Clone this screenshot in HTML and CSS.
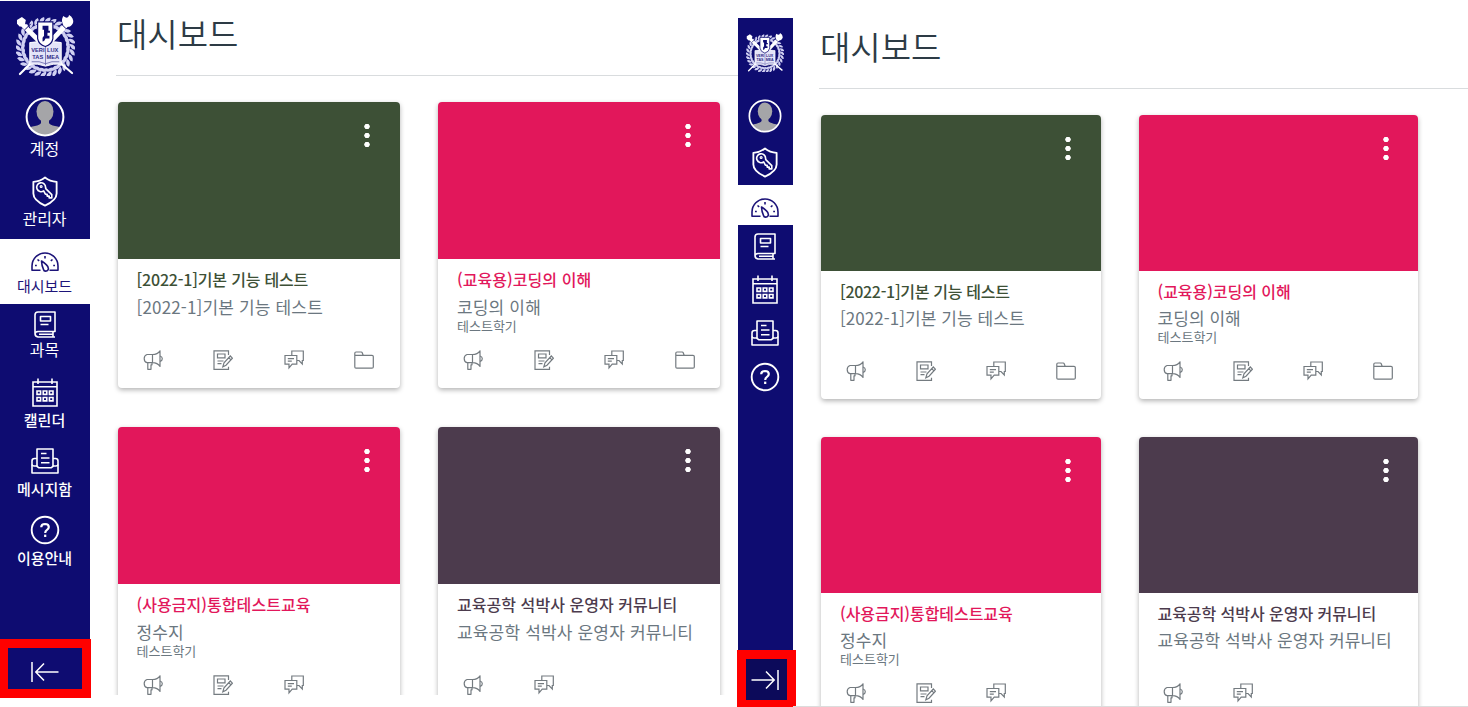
FILE: index.html
```
<!DOCTYPE html>
<html lang="ko">
  <head>
    <meta charset="UTF-8" />
    <meta name="viewport" content="width=device-width, initial-scale=1.0" />
    <title>대시보드</title>
    <link rel="stylesheet" href="styles.css">
  </head>
  <body>
    <!-- shared icons -->
    <svg class="sprite" aria-hidden="true">
      <symbol id="crest" viewBox="0 0 60 62">
        <defs>
          <g id="leaf">
            <path d="M29 8.5 q0 -5.5 6 -6 q1 4.5 -6 6z M29 8.5 q3 5 7.5 3.5 q-1.5 -5 -7.5 -3.5z" />
          </g>
          <g id="leaves">
            <use href="#leaf" />
            <use href="#leaf" transform="rotate(12 30 33)" />
            <use href="#leaf" transform="rotate(24 30 33)" />
            <use href="#leaf" transform="rotate(36 30 33)" />
            <use href="#leaf" transform="rotate(48 30 33)" />
          </g>
        </defs>
        <g fill="#d0d0f2">
          <use href="#leaves" />
          <use href="#leaves" transform="rotate(60 30 33)" />
          <use href="#leaves" transform="rotate(120 30 33)" />
          <use href="#leaves" transform="rotate(180 30 33)" />
          <use href="#leaves" transform="rotate(240 30 33)" />
          <use href="#leaves" transform="rotate(300 30 33)" />
        </g>
        <g fill="none" stroke="#fff" stroke-linecap="round">
          <path d="M6 9 L24 27" stroke-width="5" />
          <path d="M53 8 L36 26" stroke-width="5" />
          <path d="M17 47 L4 60 M43 47 L57 59" stroke-width="2.2" />
        </g>
        <path d="M1 5 l5 -3 4 3 -1 5 -5 2 -3 -3z M48 1 q5 4 6 -1 q5 3 4 8 q-3 6 -9 3 q-4 -4 -1 -10z" fill="#fff" />
        <path d="M9 15 L15 9 M46 9 L51 14" stroke="#0e0c71" />
        <path d="M14 28 q8 -2 16 1 q8 -3 16 -1 v22 q-8 -1 -16 2 q-8 -3 -16 -2z" fill="#e4e4f8" stroke="#fff" />
        <path d="M30 31 v20 M16 47.5 q8 -1 14 2 q6 -3 14 -2" fill="none" stroke="#6462aa" stroke-width=".8" />
        <g class="crest-text">
          <text x="15.5" y="38">VERI</text>
          <text x="31.5" y="38">LUX</text>
          <text x="16.5" y="44.5">TAS</text>
          <text x="31" y="44.5">MEA</text>
        </g>
        <path d="M22 7 h15.5 v17 q-1 6 -7.7 8 q-6.8 -2 -7.8 -8z" fill="#fff" stroke="#0e0c71" stroke-width="1.2" />
        <path d="M27 11 h6 v5 h1.5 v2 h-2.5 v3 h2 v3 h-4 q-1 3 -3 3 v-4 l1.5 -2 v-6 h-1.5z" fill="#0e0c71" />
      </symbol>

      <symbol id="avatar" viewBox="0 0 40 40">
        <clipPath id="face"><circle cx="20" cy="20" r="18" /></clipPath>
        <g clip-path="url(#face)" fill="#a5a5a8">
          <ellipse cx="20" cy="14.5" rx="8.5" ry="10.5" />
          <path d="M16 22 h8 v4 q1 2 6 3 q7 1 9 5 v6 H1 v-6 q2 -4 9 -5 q5 -1 6 -3z" />
        </g>
        <circle cx="20" cy="20" r="18.4" fill="none" stroke="#fff" stroke-width="2" />
      </symbol>

      <symbol id="shield" viewBox="0 0 28 32">
        <g fill="none" stroke="currentColor" stroke-width="1.9" stroke-linejoin="round">
          <path d="M14 1.5 Q19 5.5 26 6 V18 Q26 25 14 30.5 Q2 25 2 18 V6 Q9 5.5 14 1.5z" />
          <path d="M12.6 15.4 A4.6 4.6 0 1 1 14.6 11.8 L14.8 13 L21 19.2 V22.6 H18.3 V20.7 H16.2 V18.8 H14.4z" stroke-width="1.7" />
          <circle cx="10" cy="10.8" r="1" stroke-width="1.2" />
        </g>
      </symbol>

      <symbol id="gauge" viewBox="0 0 28 20">
        <g fill="none" stroke="currentColor" stroke-width="1.6" stroke-linejoin="round">
          <path d="M9.5 18.3 H1 V14 A13 13 0 0 1 27 14 V18.3 H18.5" />
          <path d="M10.5 9 Q16.8 13 17.3 16 A2.5 2.5 0 0 1 12.4 17.2 Q10.8 14 10.5 9z" />
          <path d="M14 4 v2.5 M6.5 7.5 l1.7 1.4 M21.5 7.5 l-1.7 1.4 M4 13.5 h1.8 M22.2 13.5 H24" />
        </g>
      </symbol>

      <symbol id="book" viewBox="0 0 22 27">
        <g fill="none" stroke="currentColor" stroke-width="1.6" stroke-linejoin="round">
          <path d="M21 26 H4 Q1 25.5 1 22.5 V4 Q1 1 4 1 H21 V20.5 H4 Q1.2 20.8 1 23" />
          <path d="M19 20.8 V26 M5 23.3 H19" />
          <path d="M6.5 5.5 H16.5 V10 H6.5z M6.5 13.5 H14.5" />
        </g>
      </symbol>

      <symbol id="calendar" viewBox="0 0 26 29">
        <g fill="none" stroke="currentColor" stroke-width="1.6">
          <path d="M1 4 H25 V28 H1z M1 8.8 H25 M6 .5 V6 M20 .5 V6" />
          <path d="M5 13 h3.6 v3.4 h-3.6z M11.2 13 h3.6 v3.4 h-3.6z M17.4 13 h3.6 v3.4 h-3.6z M5 19.5 h3.6 v3.4 h-3.6z M11.2 19.5 h3.6 v3.4 h-3.6z M17.4 19.5 h3.6 v3.4 h-3.6z" />
        </g>
      </symbol>

      <symbol id="inbox" viewBox="0 0 28 26">
        <g fill="none" stroke="currentColor" stroke-width="1.6" stroke-linejoin="round">
          <path d="M6 18 V1 H22 V18" />
          <path d="M6 10.5 H3.5 Q1 10.5 1 13 V25 H27 V13 Q27 10.5 24.5 10.5 H22" />
          <path d="M1 16.5 Q1.3 18 3 18 H5.5 L8 19.8 H20 L22.5 18 H25 Q26.7 18 27 16.5" />
          <path d="M10 5.5 H15.5 M10 10 H18.5 M10 14.7 H18.5" />
        </g>
      </symbol>

      <symbol id="help" viewBox="0 0 30 30">
        <g fill="none" stroke="currentColor" stroke-width="1.9">
          <circle cx="15" cy="15" r="13.3" />
          <path d="M11.2 12.3 Q11.3 9 15 9 Q18.8 9.1 18.8 12.1 Q18.8 13.8 17 14.9 Q15.2 16 15.2 18" stroke-width="2.2" />
          <path d="M15.2 19.6 V22" stroke-width="2.2" />
        </g>
      </symbol>

      <symbol id="collapse" viewBox="0 0 28 20">
        <path d="M1 0 V20 M27.5 10 H5 M13 1.5 L4.8 10 L13 18.5" fill="none" stroke="currentColor" stroke-width="1.5" />
      </symbol>

      <symbol id="announce" viewBox="0 0 20 20">
        <g fill="none" stroke="currentColor" stroke-width="1.2" stroke-linejoin="round">
          <path d="M9.5 4.5 H4 Q1.2 5.5 1.2 8.5 Q1.2 12 4 12.7 H9.5z M9.5 4.5 Q14.5 4.5 17 .8 V16.5 Q14.5 12.7 9.5 12.7" />
          <path d="M4.8 12.7 V19.3 H8 V14.8 H9 V12.7 M17 6 Q19.3 6.7 19.3 8.7 Q19.3 10.7 17 11.3" />
        </g>
      </symbol>

      <symbol id="assignment" viewBox="0 0 20 20">
        <g fill="none" stroke="currentColor" stroke-width="1.2">
          <path d="M15.5 5 V.8 H1 V19.3 H15.5 V16.8" />
          <path d="M4.5 4 H12 V7.8 H4.5z M4.5 11 H10.5 M4.5 13.6 H8.5" />
          <path d="M9.8 16.8 L11 12.8 L17.3 6 L19.4 8.2 L13 15.2 L9.8 16.8z M15.8 7.6 L17.9 9.8" />
        </g>
      </symbol>

      <symbol id="discussion" viewBox="0 0 20 20">
        <g fill="none" stroke="currentColor" stroke-width="1.2">
          <path d="M1 5.5 H12.8 V14.2 H8.2 L5 17.8 V14.2 H1z M3.8 8.7 H10 M3.8 11.2 H7.8" />
          <path d="M7.8 5.2 V1 H19.3 V10.5 H18.3 V14 L15 10.5 H13" />
        </g>
      </symbol>

      <symbol id="folder" viewBox="0 0 20 20">
        <path d="M.8 5.3 V3.3 Q.8 2 2 2 H7.2 Q8 2 8.2 2.8 L9.2 5.3 H18 Q19.3 5.3 19.3 6.5 V17 Q19.3 18.2 18 18.2 H2 Q.8 18.2 .8 17z M.8 5.3 H9.2" fill="none" stroke="currentColor" stroke-width="1.2" />
      </symbol>
    </svg>

    <div class="screens">
      <!-- expanded menu -->
      <section class="screen expanded">
        <nav class="sidebar">
          <a class="logo"><svg><use href="#crest" /></svg></a>
          <a class="item account"><svg><use href="#avatar" /></svg><span>계정</span></a>
          <a class="item admin"><svg><use href="#shield" /></svg><span>관리자</span></a>
          <a class="item dashboard active"><svg><use href="#gauge" /></svg><span>대시보드</span></a>
          <a class="item courses"><svg><use href="#book" /></svg><span>과목</span></a>
          <a class="item calendar"><svg><use href="#calendar" /></svg><span>캘린더</span></a>
          <a class="item inbox"><svg><use href="#inbox" /></svg><span>메시지함</span></a>
          <a class="item help"><svg><use href="#help" /></svg><span>이용안내</span></a>
          <button class="toggle"><svg><use href="#collapse" /></svg></button>
        </nav>
        <main class="content">
          <h1>대시보드</h1>
          <div class="cards">
            <article class="card green">
              <div class="cover"><i class="dots"></i></div>
              <div class="info">
                <h2>[2022-1]기본 기능 테스트</h2>
                <p class="name">[2022-1]기본 기능 테스트</p>
              </div>
              <div class="actions">
                <svg><use href="#announce" /></svg>
                <svg><use href="#assignment" /></svg>
                <svg><use href="#discussion" /></svg>
                <svg><use href="#folder" /></svg>
              </div>
            </article>
            <article class="card pink">
              <div class="cover"><i class="dots"></i></div>
              <div class="info">
                <h2>(교육용)코딩의 이해</h2>
                <p class="name">코딩의 이해</p>
                <p class="term">테스트학기</p>
              </div>
              <div class="actions">
                <svg><use href="#announce" /></svg>
                <svg><use href="#assignment" /></svg>
                <svg><use href="#discussion" /></svg>
                <svg><use href="#folder" /></svg>
              </div>
            </article>
            <article class="card pink">
              <div class="cover"><i class="dots"></i></div>
              <div class="info">
                <h2>(사용금지)통합테스트교육</h2>
                <p class="name">정수지</p>
                <p class="term">테스트학기</p>
              </div>
              <div class="actions">
                <svg><use href="#announce" /></svg>
                <svg><use href="#assignment" /></svg>
                <svg><use href="#discussion" /></svg>
              </div>
            </article>
            <article class="card purple">
              <div class="cover"><i class="dots"></i></div>
              <div class="info">
                <h2>교육공학 석박사 운영자 커뮤니티</h2>
                <p class="name">교육공학 석박사 운영자 커뮤니티</p>
              </div>
              <div class="actions">
                <svg><use href="#announce" /></svg>
                <svg><use href="#discussion" /></svg>
              </div>
            </article>
          </div>
        </main>
      </section>

      <!-- collapsed menu -->
      <section class="screen collapsed">
        <nav class="sidebar">
          <a class="logo"><svg><use href="#crest" /></svg></a>
          <a class="item account"><svg><use href="#avatar" /></svg></a>
          <a class="item admin"><svg><use href="#shield" /></svg></a>
          <a class="item dashboard active"><svg><use href="#gauge" /></svg></a>
          <a class="item courses"><svg><use href="#book" /></svg></a>
          <a class="item calendar"><svg><use href="#calendar" /></svg></a>
          <a class="item inbox"><svg><use href="#inbox" /></svg></a>
          <a class="item help"><svg><use href="#help" /></svg></a>
          <button class="toggle"><svg><use href="#collapse" /></svg></button>
        </nav>
        <main class="content">
          <h1>대시보드</h1>
          <div class="cards">
            <article class="card green">
              <div class="cover"><i class="dots"></i></div>
              <div class="info">
                <h2>[2022-1]기본 기능 테스트</h2>
                <p class="name">[2022-1]기본 기능 테스트</p>
              </div>
              <div class="actions">
                <svg><use href="#announce" /></svg>
                <svg><use href="#assignment" /></svg>
                <svg><use href="#discussion" /></svg>
                <svg><use href="#folder" /></svg>
              </div>
            </article>
            <article class="card pink">
              <div class="cover"><i class="dots"></i></div>
              <div class="info">
                <h2>(교육용)코딩의 이해</h2>
                <p class="name">코딩의 이해</p>
                <p class="term">테스트학기</p>
              </div>
              <div class="actions">
                <svg><use href="#announce" /></svg>
                <svg><use href="#assignment" /></svg>
                <svg><use href="#discussion" /></svg>
                <svg><use href="#folder" /></svg>
              </div>
            </article>
            <article class="card pink">
              <div class="cover"><i class="dots"></i></div>
              <div class="info">
                <h2>(사용금지)통합테스트교육</h2>
                <p class="name">정수지</p>
                <p class="term">테스트학기</p>
              </div>
              <div class="actions">
                <svg><use href="#announce" /></svg>
                <svg><use href="#assignment" /></svg>
                <svg><use href="#discussion" /></svg>
              </div>
            </article>
            <article class="card purple">
              <div class="cover"><i class="dots"></i></div>
              <div class="info">
                <h2>교육공학 석박사 운영자 커뮤니티</h2>
                <p class="name">교육공학 석박사 운영자 커뮤니티</p>
              </div>
              <div class="actions">
                <svg><use href="#announce" /></svg>
                <svg><use href="#discussion" /></svg>
              </div>
            </article>
          </div>
        </main>
      </section>
    </div>
  </body>
</html>
```
FILE: styles.css
```
* {
  box-sizing: border-box;
}

body {
  margin: 0;
  background-color: #fff;
  font-family: "Noto Sans CJK KR", sans-serif;
  overflow: hidden;
}

h1,
h2,
p {
  margin: 0;
}

.sprite {
  display: block;
  width: 0;
  height: 0;
}

.crest-text {
  font-family: "Liberation Sans", sans-serif;
  font-size: 5.8px;
  font-weight: bold;
  fill: #2c2a86;
}

.screens {
  display: flex;
  width: 1468px;
  height: 707px;
}

.screen {
  display: flex;
}

.expanded {
  width: 738px;
  height: 698px;
  padding-top: 1px;
}

.collapsed {
  width: 730px;
  height: 707px;
  padding-top: 18px;
}

/* sidebar */
.sidebar {
  display: flex;
  flex-direction: column;
  align-items: center;
  flex-shrink: 0;
  background-color: #0e0c71;
  color: #fff;
}

.expanded .sidebar {
  width: 90px;
}

.collapsed .sidebar {
  width: 55px;
}

.logo {
  display: flex;
  justify-content: center;
  flex-shrink: 0;
}

.expanded .logo {
  height: 89px;
  padding-top: 14px;
}

.expanded .logo svg {
  width: 59px;
  height: 61px;
}

.collapsed .logo {
  height: 77px;
  padding-top: 15px;
  padding-right: 2px;
}

.collapsed .logo svg {
  width: 38px;
  height: 39px;
}

.item {
  display: flex;
  flex-direction: column;
  align-items: center;
  flex-shrink: 0;
  width: 100%;
  padding-right: 1px;
  font-size: 15px;
  line-height: 18px;
}

.item svg {
  flex-shrink: 0;
  width: 28px;
}

.active {
  background-color: #fff;
  color: #1d1479;
}

.account svg {
  width: 40px;
  height: 40px;
}

.admin svg {
  height: 31px;
}

.dashboard svg {
  height: 20px;
}

.courses svg {
  height: 27px;
}

.calendar svg {
  height: 29px;
}

.inbox svg {
  height: 26px;
}

.help svg {
  width: 30px;
  height: 30px;
}

.expanded .account {
  height: 77px;
  padding-top: 7px;
  gap: 2px;
  font-size: 16px;
}

.expanded .admin {
  height: 72px;
  padding-top: 9px;
  gap: 2px;
  font-size: 16px;
}

.expanded .dashboard {
  height: 65px;
  padding-top: 13px;
  gap: 5px;
}

.expanded .courses {
  height: 66px;
  padding-top: 7px;
  gap: 2px;
  font-size: 16px;
}

.expanded .calendar {
  height: 70px;
  padding-top: 8px;
  gap: 4px;
  font-weight: 500;
}

.expanded .inbox {
  height: 67px;
  padding-top: 8px;
  gap: 6px;
  font-weight: 500;
}

.expanded .help {
  height: 70px;
  padding-top: 8px;
  gap: 4px;
  font-weight: 500;
}

.collapsed .item {
  justify-content: center;
  height: 43px;
  padding-right: 2px;
}

.collapsed .account {
  height: 42px;
}

.collapsed .account svg {
  width: 34px;
  height: 34px;
}

.collapsed .admin {
  height: 48px;
  padding-top: 2px;
}

.collapsed .dashboard {
  height: 40px;
  padding-top: 6px;
}

.collapsed .help {
  height: 46px;
  padding-right: 1px;
}

.toggle {
  display: flex;
  align-items: center;
  justify-content: center;
  flex-shrink: 0;
  align-self: flex-start;
  margin-top: auto;
  padding: 0;
  border: 8px solid #ff0000;
  background-color: #0e0c71;
  color: #fff;
}

.toggle svg {
  width: 28px;
  height: 20px;
}

.expanded .toggle {
  width: 91px;
  height: 59px;
  border-width: 9px 9px 9px 8px;
  padding-top: 6px;
}

.collapsed .toggle {
  width: 59px;
  height: 57px;
  margin-left: -1px;
  border-width: 9px 9px 7px 9px;
  padding-right: 3px;
  background-color: #0c0a5a;
}

.collapsed .toggle svg {
  transform: scaleX(-1);
}

/* dashboard */
.content {
  flex: 1;
  overflow: hidden;
}

.expanded .content {
  height: 694px;
  padding-left: 26px;
}

.collapsed .content {
  height: 689px;
  padding-left: 26px;
  border-bottom: 1px solid #dcdcdc;
}

h1 {
  padding-left: 1px;
  border-bottom: 1px solid #d9dcde;
  color: #2d3b45;
  font-size: 33px;
  font-weight: 350;
  line-height: 48px;
}

.expanded h1 {
  height: 75px;
  padding-top: 8px;
}

.collapsed h1 {
  height: 71px;
  padding-top: 4px;
}

.cards {
  display: grid;
}

.expanded .cards {
  grid-template-columns: 282px 282px;
  gap: 39px 38.5px;
  padding: 26px 0 0 1.5px;
}

.collapsed .cards {
  grid-template-columns: 279.5px 279.5px;
  gap: 38px;
  padding: 26px 0 0 2px;
}

.card {
  display: flex;
  flex-direction: column;
  height: 286px;
  border-radius: 4px;
  background-color: #fff;
  box-shadow: 0 2px 5px rgba(0, 0, 0, 0.3);
}

.collapsed .card {
  height: 284px;
}

.cover {
  display: flex;
  justify-content: flex-end;
  flex-shrink: 0;
  height: 157px;
  padding: 20px 29.5px 0 0;
  border-radius: 4px 4px 0 0;
}

.collapsed .cover {
  height: 156px;
}

.green .cover {
  background-color: #3d5036;
}

.pink .cover {
  background-color: #e2175b;
}

.purple .cover {
  background-color: #4c3b4d;
}

.dots {
  width: 6px;
  height: 27px;
  background: radial-gradient(circle, #fff 2.4px, transparent 3px) 0 0 / 6px 9px;
}

.info {
  height: 91px;
  padding: 8px 0 0 19px;
  color: #6b7780;
  white-space: nowrap;
}

.collapsed .info {
  height: 90px;
}

.info h2 {
  font-size: 16px;
  font-weight: 500;
  line-height: 24px;
  letter-spacing: 0.05px;
}

.green h2 {
  color: #3d5036;
}

.green .info h2 {
  letter-spacing: -0.18px;
}

.pink h2 {
  color: #e2175b;
}

.purple h2 {
  color: #4c3b4d;
}

.name {
  margin-top: 4px;
  font-size: 17px;
  line-height: 23px;
  letter-spacing: 0.17px;
}

.term {
  font-size: 13px;
  line-height: 16px;
}

.collapsed .info h2 {
  letter-spacing: -0.05px;
}

.collapsed .green .info h2 {
  letter-spacing: -0.3px;
}

.collapsed .name {
  margin-top: 3px;
  letter-spacing: 0.06px;
}

.actions {
  display: grid;
  grid-template-columns: repeat(4, 1fr);
  justify-items: center;
  color: #747b80;
}

.actions svg {
  width: 20px;
  height: 20px;
}
```
